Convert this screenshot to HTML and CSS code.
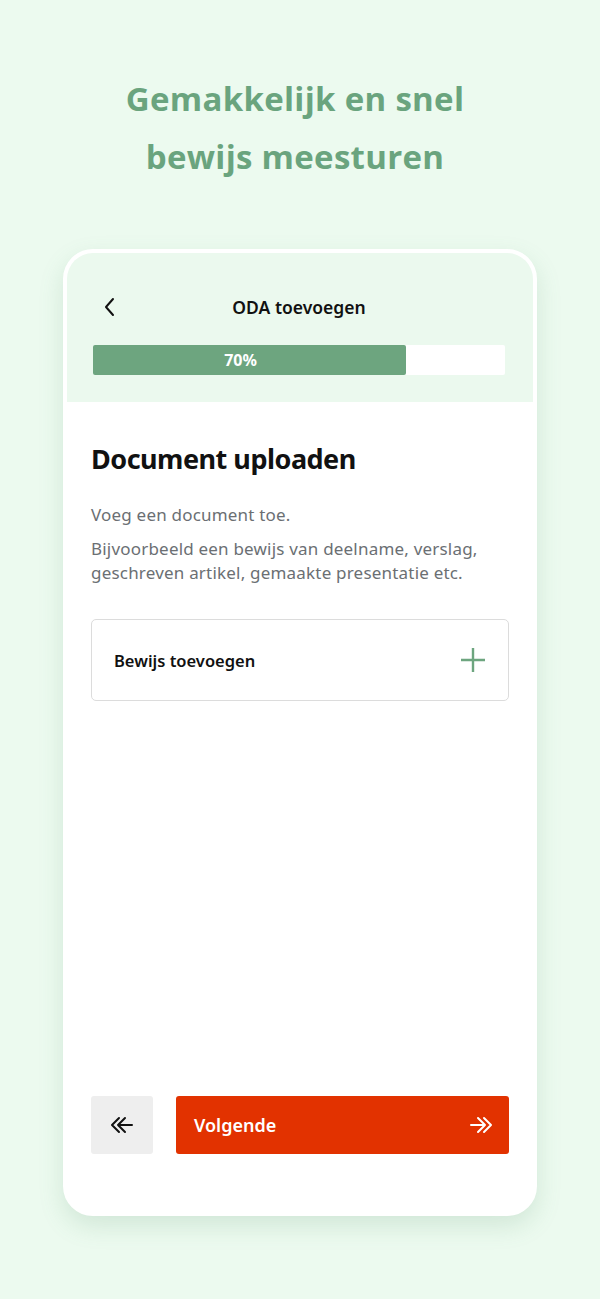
FILE: index.html
```html
<!DOCTYPE html>
<html lang="nl">
<head>
    <meta charset="UTF-8">
    <meta name="viewport" content="width=device-width, initial-scale=1.0">
    <title>ODA toevoegen</title>
    <link rel="stylesheet" href="styles.css">
</head>
<body>
    <h1 class="headline">Gemakkelijk en snel<br>bewijs meesturen</h1>

    <div class="phone">
        <div class="phone-header">
            <div class="topbar">
                <button class="back-link" aria-label="Terug">
                    <svg width="14" height="20" viewBox="0 0 14 20"><path d="M10 2 L3 10 L10 18" fill="none" stroke="#111" stroke-width="2" stroke-linecap="round" stroke-linejoin="round"/></svg>
                </button>
                <div class="title">ODA toevoegen</div>
            </div>
            <div class="progress">
                <div class="progress-fill" style="width: 76%">70%</div>
            </div>
        </div>

        <div class="phone-body">
            <h2>Document uploaden</h2>
            <p class="intro">Voeg een document toe.</p>
            <p class="intro">Bijvoorbeeld een bewijs van deelname, verslag, geschreven artikel, gemaakte presentatie etc.</p>

            <div class="upload-card">
                <span>Bewijs toevoegen</span>
                <svg width="26" height="26" viewBox="0 0 26 26"><path d="M13 1 V25 M1 13 H25" stroke="#6da57f" stroke-width="2.4"/></svg>
            </div>

            <div class="spacer"></div>

            <div class="actions">
                <button class="btn-prev" aria-label="Vorige">
                    <svg width="24" height="20" viewBox="0 0 24 20"><path d="M9 3 L2 10 L9 17 M15 3 L8 10 L15 17 M8 10 H22" fill="none" stroke="#111" stroke-width="2" stroke-linecap="round" stroke-linejoin="round"/></svg>
                </button>
                <button class="btn-next">
                    <span>Volgende</span>
                    <svg width="24" height="20" viewBox="0 0 24 20"><path d="M15 3 L22 10 L15 17 M9 3 L16 10 L9 17 M2 10 H16" fill="none" stroke="#fff" stroke-width="2" stroke-linecap="round" stroke-linejoin="round"/></svg>
                </button>
            </div>
        </div>
    </div>
</body>
</html>
```

FILE: styles.css
```css
body, html {
    margin: 0;
    padding: 0;
    width: 100%;
    height: 100%;
}
body {
    background-color: #ecfaef;
    font-family: "Noto Sans", "Liberation Sans", sans-serif;
    display: flex;
    flex-direction: column;
    align-items: center;
}
.headline {
    margin: 70px 0 0 -10px;
    font-family: "Open Sans", "Noto Sans", sans-serif;
    font-size: 33px;
    font-weight: 700;
    line-height: 58px;
    letter-spacing: 0.3px;
    color: #6aa47e;
    text-align: center;
}
.phone {
    margin-top: 63px;
    width: 466px;
    height: 959px;
    border: 4px solid #fff;
    border-radius: 30px;
    background-color: #fff;
    box-shadow: 0 10px 24px rgba(90, 150, 110, 0.18);
    overflow: hidden;
    display: flex;
    flex-direction: column;
}
.phone-header {
    background-color: #ebf9ee;
    padding: 32px 28px 27px 26px;
}
.topbar {
    position: relative;
    display: flex;
    align-items: center;
    justify-content: center;
    height: 44px;
}
.back-link {
    position: absolute;
    left: 10px;
    top: 12px;
    border: none;
    background: none;
    padding: 0;
}
.title {
    font-size: 17.5px;
    font-weight: 600;
    color: #111;
}
.progress {
    margin-top: 16px;
    height: 30px;
    background-color: #fff;
    border-radius: 2px;
}
.progress-fill {
    height: 100%;
    background-color: #6da57f;
    border-radius: 2px;
    color: #fff;
    font-weight: 700;
    font-size: 16px;
    padding-right: 18px;
    box-sizing: border-box;
    display: flex;
    align-items: center;
    justify-content: center;
}
.phone-body {
    flex: 1;
    padding: 38px 24px 58px;
    display: flex;
    flex-direction: column;
}
.phone-body h2 {
    margin: 0 0 26px;
    font-size: 27px;
    font-weight: 700;
    color: #111;
    letter-spacing: -0.5px;
}
.intro {
    margin: 0 0 10px;
    font-size: 17px;
    line-height: 24px;
    letter-spacing: 0.2px;
    color: #6b6f73;
}
.upload-card {
    margin-top: 24px;
    height: 80px;
    border: 1px solid #dcdcdc;
    border-radius: 5px;
    padding: 0 22px;
    display: flex;
    align-items: center;
    justify-content: space-between;
    font-size: 16.5px;
    font-weight: 600;
    color: #111;
}
.spacer {
    flex: 1;
}
.actions {
    display: flex;
    gap: 23px;
    height: 58px;
}
.actions button {
    border: none;
    border-radius: 3px;
    cursor: pointer;
}
.btn-prev {
    width: 62px;
    background-color: #eeeeee;
    display: flex;
    align-items: center;
    justify-content: center;
}
.btn-next {
    flex: 1;
    background-color: #e23200;
    color: #fff;
    font-family: inherit;
    font-size: 18px;
    font-weight: 600;
    padding: 0 16px 0 18px;
    display: flex;
    align-items: center;
    justify-content: space-between;
}
```
